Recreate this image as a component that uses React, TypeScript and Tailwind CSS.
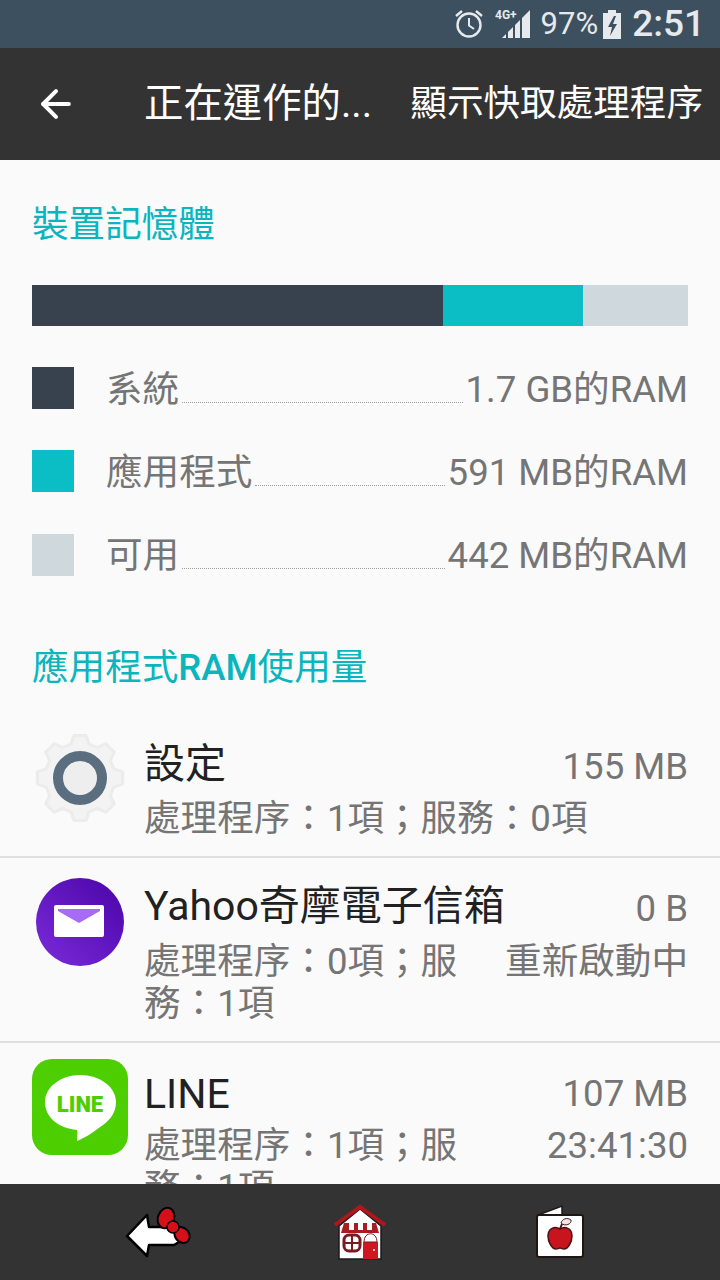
import { ArrowLeft } from "lucide-react";

const font = { fontFamily: '"Roboto", "Noto Sans CJK TC", sans-serif' };

const legend = [
  { color: "bg-[#37424e]", label: "系統", value: "1.7 GB的RAM" },
  { color: "bg-[#0bbdc4]", label: "應用程式", value: "591 MB的RAM" },
  { color: "bg-[#cfd8dd]", label: "可用", value: "442 MB的RAM" },
];

// eight teeth, one every 45 degrees
const gearPath =
  Array.from({ length: 8 }, (_, i) => {
    const a = i * 45 - 90;
    return [
      [a - 15, 35],
      [a - 8, 43],
      [a + 8, 43],
      [a + 15, 35],
    ]
      .map(([deg, r]) => {
        const rad = (deg * Math.PI) / 180;
        return `${(46 + r * Math.cos(rad)).toFixed(1)} ${(46 + r * Math.sin(rad)).toFixed(1)}`;
      })
      .join("L");
  })
    .map((s, i) => (i === 0 ? "M" : "L") + s)
    .join("") + "Z";

function AlarmIcon() {
  return (
    <svg width="30" height="30" viewBox="0 0 30 30" fill="none" stroke="#e6eaec" strokeWidth="2.4">
      <circle cx="15" cy="16" r="11.5" />
      <path d="M15 9v7.5l5 3.5" strokeWidth="2" />
      <path d="M2 7l6-5M28 7l-6-5" />
    </svg>
  );
}

function SignalIcon() {
  return (
    <svg width="36" height="30" viewBox="0 0 36 30" fill="#e6eaec">
      <path d="M7 29l4-4v4zM13 29v-6l5-5v11zM20 29V16l5-5v18zM27 29V9l8-8v28z" />
      <text x="0" y="9.5" fontSize="12" fontWeight="700" fontFamily="Roboto">4G+</text>
    </svg>
  );
}

function BatteryIcon() {
  return (
    <svg width="20" height="30" viewBox="0 0 20 30">
      <path d="M6 1h8v3h5v26H1V4h5z" fill="#e6eaec" />
      <path d="M12 7l-6 11h4l-2 9 7-12h-4l3-8z" fill="#3d5060" />
    </svg>
  );
}

function GearIcon() {
  return (
    <svg width="92" height="92" viewBox="0 0 92 92">
      <path d={gearPath} fill="#f3f3f3" stroke="#ececec" strokeWidth="3" strokeLinejoin="round" />
      <circle cx="46" cy="46" r="22" fill="#eeeeee" stroke="#5a6e7f" strokeWidth="10" />
    </svg>
  );
}

function MailIcon() {
  return (
    <svg width="90" height="90" viewBox="0 0 90 90">
      <defs>
        <linearGradient id="mail" x1="0" y1="1" x2="1" y2="0">
          <stop offset="0" stopColor="#7b2bd9" />
          <stop offset="1" stopColor="#4a05a8" />
        </linearGradient>
      </defs>
      <circle cx="45" cy="45" r="44" fill="url(#mail)" />
      <rect x="19" y="28" width="50" height="32" rx="2" fill="#ffffff" />
      <path d="M23 32h42v2L44 46 23 34z" fill="#a76bf5" />
    </svg>
  );
}

function LineIcon() {
  return (
    <div className="flex h-[96px] w-[96px] items-center justify-center rounded-[20px] bg-[#4cce00]">
      <svg width="96" height="96" viewBox="0 0 96 96">
        <path
          d="M48 16c-19 0-35 12-35 27 0 15 13 26 32 28 1 2 0 6 0 11 8-3 18-10 26-16 8-6 13-13 13-23 0-15-16-27-36-27z"
          fill="#ffffff"
        />
        <text x="48" y="53" textAnchor="middle" fontSize="22" fontWeight="900" fill="#4cce00" fontFamily="Roboto">
          LINE
        </text>
      </svg>
    </div>
  );
}

function BowArrowIcon() {
  return (
    <svg width="66" height="52" viewBox="0 0 66 52">
      <path
        d="M2 30L22 9l2 12h28l2 15-5 3H24l-2 11z"
        fill="#ffffff"
        stroke="#000000"
        strokeWidth="2.5"
        strokeLinejoin="round"
      />
      <ellipse cx="41" cy="12" rx="8" ry="10.5" transform="rotate(20 41 12)" fill="#d6101a" stroke="#000" strokeWidth="2" />
      <ellipse cx="57" cy="29" rx="7" ry="8.5" transform="rotate(-40 57 29)" fill="#d6101a" stroke="#000" strokeWidth="2" />
      <circle cx="48" cy="21" r="6" fill="#d6101a" stroke="#000" strokeWidth="1.5" />
    </svg>
  );
}

function ShopIcon() {
  return (
    <svg width="56" height="56" viewBox="0 0 56 56">
      <path d="M7 22L28 5l21 17v33H7z" fill="#ffffff" stroke="#1a1a1a" strokeWidth="1.5" />
      <path d="M3 21L28 3l25 18" fill="none" stroke="#b3151c" strokeWidth="4" />
      <path d="M12 19h32l3 10H9z" fill="#a81c22" />
      <path d="M17 19h5v7h-5zM26 19h5v7h-5zM35 19h5v7h-5z" fill="#ffffff" />
      <path d="M31 38h15v17H31z" fill="#cf1720" />
      <circle cx="42" cy="46" r="1" fill="#ffffff" />
      <rect x="12" y="31" width="16" height="16" rx="5" fill="#ffffff" stroke="#7a1b20" strokeWidth="3" />
      <path d="M20 31v16M12 39h16" stroke="#7a1b20" strokeWidth="2" />
      <path d="M32 38c0-11 13-11 13 0z" fill="#ffffff" stroke="#7a1b20" strokeWidth="1" />
    </svg>
  );
}

function AppleCardIcon() {
  return (
    <svg width="50" height="56" viewBox="0 0 50 56">
      <path d="M3 11L27 2v10H3z" fill="#ffffff" stroke="#1a1a1a" strokeWidth="1.5" />
      <rect x="2" y="11" width="46" height="42" rx="2" fill="#ffffff" stroke="#1f1612" strokeWidth="2" />
      <path
        d="M25 25c-5-3-12-1-12 7 0 6 4 13 8 13 2 0 3-1 4-1s2 1 4 1c4 0 8-7 8-13 0-8-7-10-12-7z"
        fill="#c8141c"
        stroke="#4a1114"
        strokeWidth="1.5"
      />
      <path d="M25 25l2-5" stroke="#4a1114" strokeWidth="2" />
      <path d="M26 19c1-4 6-6 10-3 1 4-6 7-10 3z" fill="#e8e8e8" stroke="#4a1114" strokeWidth="1" />
    </svg>
  );
}

export default function App() {
  return (
    <div style={font} className="flex h-[1280px] w-[720px] flex-col overflow-hidden bg-[#fafafa]">
      {/* status bar */}
      <div className="flex h-[48px] shrink-0 items-center justify-end bg-[#3d5060] pr-[15px] text-[#e6eaec]">
        <AlarmIcon />
        <div className="ml-[11px]">
          <SignalIcon />
        </div>
        <span className="ml-[10px] text-[31px]">97%</span>
        <div className="ml-[4px]">
          <BatteryIcon />
        </div>
        <span className="ml-[10px] text-[37px] font-medium">2:51</span>
      </div>

      {/* toolbar */}
      <div className="flex h-[112px] shrink-0 items-center bg-[#333333] text-white">
        <div className="ml-[34px] w-[110px]">
          <ArrowLeft size={44} strokeWidth={2.2} />
        </div>
        <span className="text-[39.4px]">正在運作的...</span>
        <span className="ml-auto mr-[17px] text-[36.6px]">顯示快取處理程序</span>
      </div>

      {/* content */}
      <div className="min-h-0 flex-1 overflow-hidden">
        <div className="px-[32px]">
          <h2 className="pt-[40px] text-[36.6px] leading-[50px] text-[#0bb5bd]">裝置記憶體</h2>
          <div className="mt-[35px] flex h-[41px]">
            <div className="w-[411px] bg-[#37424e]" />
            <div className="w-[140px] bg-[#0bbdc4]" />
            <div className="flex-1 bg-[#cfd8dd]" />
          </div>
          <div className="mt-[41px] flex flex-col gap-[41.4px]">
            {legend.map((row) => (
              <div key={row.label} className="flex h-[42px] items-center text-[36.6px] text-[#757575]">
                <div className={`h-[42px] w-[42px] shrink-0 ${row.color}`} />
                <span className="ml-[32px] pt-[4px]">{row.label}</span>
                <div className="mx-[3px] mt-[28px] flex-1 border-b border-dotted border-[#9e9e9e]" />
                <span className="pt-[4px]">{row.value}</span>
              </div>
            ))}
          </div>
          <h2 className="mt-[67px] text-[36.6px] leading-[50px] text-[#0bb5bd]">
            應用程式<span className="font-medium">RAM</span>使用量
          </h2>
        </div>

        <div className="mt-[19px]">
          <div className="flex h-[146px] border-b-2 border-[#e0e0e0] px-[32px]">
            <div className="flex w-[113px] shrink-0 justify-start pt-[20px] pl-[2px]">
              <GearIcon />
            </div>
            <div className="-ml-[1px] flex-1 pt-[28px]">
              <div className="flex h-[50px] items-center justify-between">
                <span className="text-[41px] text-[#212121]">設定</span>
                <span className="pt-[6px] text-[36.6px] text-[#757575]">155 MB</span>
              </div>
              <div className="mt-[8px] text-[36.6px] leading-[42px] text-[#757575]">處理程序：1項；服務：0項</div>
            </div>
          </div>

          <div className="flex h-[185px] border-b-2 border-[#e0e0e0] px-[32px]">
            <div className="w-[113px] shrink-0 pt-[19px] pl-[3px]">
              <MailIcon />
            </div>
            <div className="-ml-[1px] flex-1 pt-[24px]">
              <div className="flex h-[50px] items-center justify-between">
                <span className="text-[41px] text-[#212121]">Yahoo奇摩電子信箱</span>
                <span className="pt-[6px] text-[36.6px] text-[#757575]">0 B</span>
              </div>
              <div className="mt-[9px] flex justify-between text-[36.6px] leading-[42px] text-[#757575]">
                <span className="w-[320px]">處理程序：0項；服務：1項</span>
                <span>重新啟動中</span>
              </div>
            </div>
          </div>

          <div className="flex px-[32px]">
            <div className="w-[113px] shrink-0 pt-[16px]">
              <LineIcon />
            </div>
            <div className="-ml-[1px] flex-1 pt-[27px]">
              <div className="flex h-[50px] items-center justify-between">
                <span className="text-[41px] text-[#212121]">LINE</span>
                <span className="text-[36.6px] text-[#757575]">107 MB</span>
              </div>
              <div className="mt-[5px] flex justify-between text-[36.6px] leading-[42px] text-[#757575]">
                <span className="w-[320px]">處理程序：1項；服務：1項</span>
                <span>23:41:30</span>
              </div>
            </div>
          </div>
        </div>
      </div>

      {/* bottom nav */}
      <div className="flex h-[96px] shrink-0 items-center bg-[#333333] pl-[125px]">
        <BowArrowIcon />
        <div className="ml-[141px]">
          <ShopIcon />
        </div>
        <div className="ml-[147px]">
          <AppleCardIcon />
        </div>
      </div>
    </div>
  );
}
